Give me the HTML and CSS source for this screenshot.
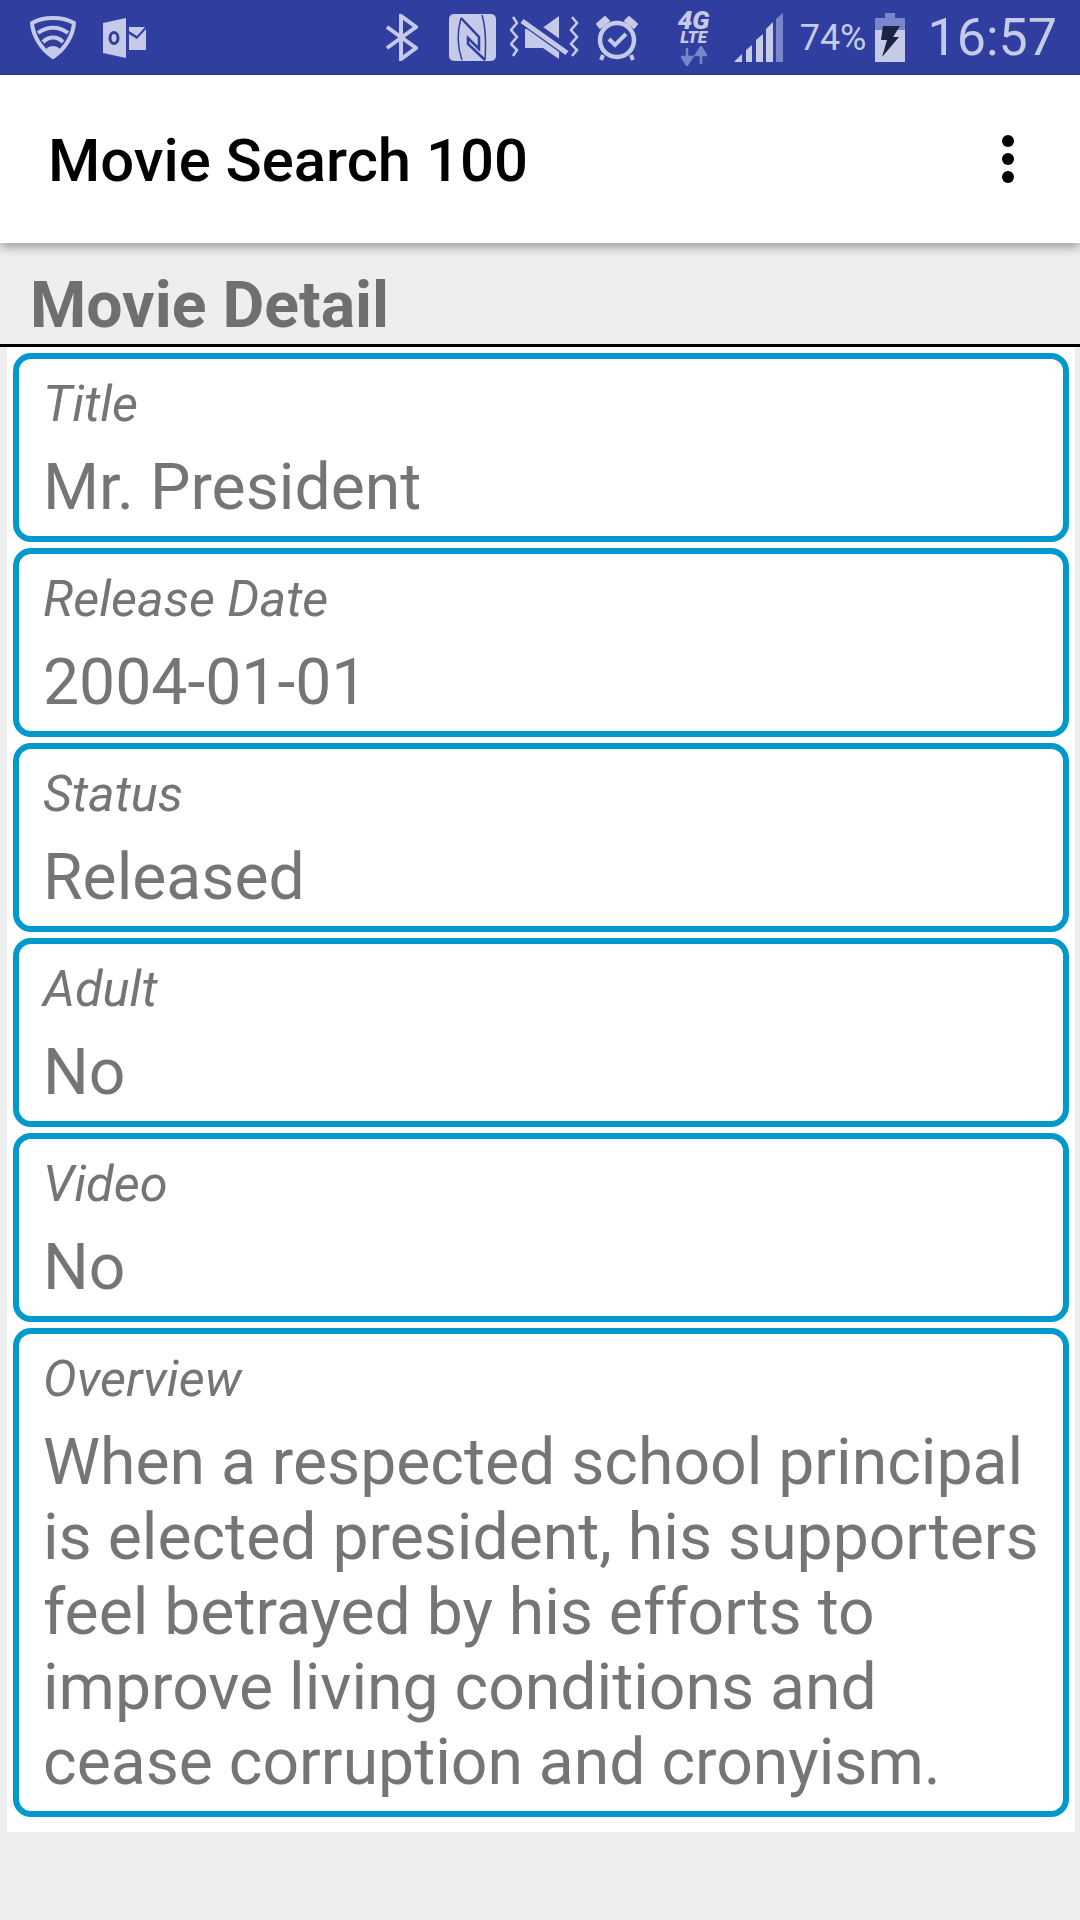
FILE: index.html
```html
<!DOCTYPE html>
<html lang="en">
<head>
    <meta charset="UTF-8">
    <meta name="viewport" content="width=device-width, initial-scale=1.0">
    <title>Movie Search 100</title>
    <link rel="stylesheet" href="styles.css">
</head>
<body>

    <!-- Status bar -->
    <div class="status-bar">
        <div class="status-left">
            <svg class="ico-shield" viewBox="0 0 46 43"><path d="M23 2C15 2 8 3.500 2 7C3 20 11 33 23 41C35 33 43 20 44 7C38 3.500 31 2 23 2Z" fill="none" stroke="#c5cae9" stroke-width="4" stroke-linejoin="round"/><path d="M8 17C17 10 29 10 38 17M13 26C19 20 27 20 33 26" fill="none" stroke="#c5cae9" stroke-width="4"/><path d="M16 33C20 29 26 29 30 33L23 41Z" fill="#c5cae9"/></svg>
            <svg class="ico-outlook" viewBox="0 0 43 40"><path d="M0 5L23 0V40L0 35Z" fill="#c5cae9"/><ellipse cx="11" cy="20" rx="4" ry="5.500" fill="none" stroke="#303f9f" stroke-width="3"/><path d="M26 9H42L34 18L26 13Z" fill="#c5cae9"/><path d="M26 16L34 21L43 11V32H26Z" fill="#c5cae9"/></svg>
        </div>
        <div class="status-right">
            <svg class="ico-bt" viewBox="0 0 33 47"><path d="M2 13L31 34L16 45V2L31 13L2 34" fill="none" stroke="#c5cae9" stroke-width="4"/></svg>
            <svg class="ico-nfc" viewBox="0 0 47 47"><rect width="47" height="47" rx="5" fill="#c5cae9"/><path d="M12 4C8 18 8 32 13 46M33 1C37 14 37 30 36 46" fill="none" stroke="#303f9f" stroke-width="1.500"/><path d="M12 4L30 23V35L19 24V30L36 46" fill="none" stroke="#303f9f" stroke-width="2.500"/></svg>
            <svg class="ico-mute" viewBox="0 0 69 44"><path d="M3 1L7 7L1 14L7 21L1 28L7 34L3 40M62 1L67 7L61 14L67 21L61 28L67 34L62 40" fill="none" stroke="#c5cae9" stroke-width="2.500"/><path d="M15 13H31L49 0V43L33 32H15Z" fill="#c5cae9"/><path d="M11 2L60 37" stroke="#303f9f" stroke-width="11"/><path d="M12 5L57 37" stroke="#c5cae9" stroke-width="5"/></svg>
            <svg class="ico-alarm" viewBox="0 0 44 47"><circle cx="22" cy="26" r="17" fill="none" stroke="#c5cae9" stroke-width="4.500"/><path d="M2 10L10 3L14 7L5 14ZM42 10L34 3L30 7L39 14Z" fill="#c5cae9" stroke="#c5cae9" stroke-width="2" stroke-linejoin="round"/><path d="M14 25L20 31L31 20" fill="none" stroke="#c5cae9" stroke-width="4"/><path d="M8 41L6 46M36 41L38 46" stroke="#c5cae9" stroke-width="4"/></svg>
            <div class="ico-lte">
                <span class="lte-4g">4G</span>
                <span class="lte-text">LTE</span>
                <svg class="lte-arrows" viewBox="0 0 26 20"><path d="M6 2V11M1 11H11L6 19ZM20 18V9M15 9H25L20 1Z" fill="#7986cb" stroke="#7986cb" stroke-width="2.500"/></svg>
            </div>
            <svg class="ico-signal" viewBox="0 0 49 49"><path d="M0 49L8 41V49Z" fill="#c5cae9"/><path d="M12 37L18 32V49H12ZM22 27L29 21V49H22ZM32 16L39 9V49H32Z" fill="#c5cae9"/><path d="M42 6L49 0V49H42Z" fill="#7986cb"/></svg>
            <span class="battery-pct">74%</span>
            <svg class="ico-battery" viewBox="0 0 30 49"><path d="M10 0H20V5H30V17H0V5H10Z" fill="#7986cb"/><rect y="17" width="30" height="32" fill="#c5cae9"/><path d="M8 13H25L18 24H24L7 44L12 27H6Z" fill="#1a2340"/></svg>
            <span class="clock">16:57</span>
        </div>
    </div>

    <!-- App bar -->
    <div class="app-bar">
        <span class="app-title">Movie Search 100</span>
        <div class="overflow-menu">
            <span class="dot"></span>
            <span class="dot"></span>
            <span class="dot"></span>
        </div>
    </div>

    <h1 class="section-title">Movie Detail</h1>

    <div class="detail-panel">
        <div class="field">
            <div class="field-label">Title</div>
            <div class="field-value">Mr. President</div>
        </div>
        <div class="field">
            <div class="field-label">Release Date</div>
            <div class="field-value">2004-01-01</div>
        </div>
        <div class="field">
            <div class="field-label">Status</div>
            <div class="field-value">Released</div>
        </div>
        <div class="field">
            <div class="field-label">Adult</div>
            <div class="field-value">No</div>
        </div>
        <div class="field">
            <div class="field-label">Video</div>
            <div class="field-value">No</div>
        </div>
        <div class="field">
            <div class="field-label">Overview</div>
            <div class="field-value">When a respected school principal is elected president, his supporters feel betrayed by his efforts to improve living conditions and cease corruption and cronyism.</div>
        </div>
    </div>

</body>
</html>
```

FILE: styles.css
```css
html, body {
    margin: 0;
    padding: 0;
}
body {
    width: 1080px;
    height: 1920px;
    overflow: hidden;
    background: #eeeeee;
    font-family: Roboto, sans-serif;
}
svg {
    display: block;
    flex: none;
}

/* status bar */
.status-bar {
    height: 75px;
    background: #303f9f;
    color: #c5cae9;
    display: flex;
    justify-content: space-between;
    align-items: center;
    padding: 0 23px 0 30px;
}
.status-left, .status-right {
    display: flex;
    align-items: center;
}
.ico-shield { width: 46px; height: 43px; margin-right: 27px; }
.ico-outlook { width: 43px; height: 40px; }
.ico-bt { width: 33px; height: 47px; }
.ico-nfc { width: 47px; height: 47px; margin-left: 31px; }
.ico-mute { width: 69px; height: 44px; margin-left: 14px; }
.ico-alarm { width: 44px; height: 47px; margin-left: 16px; }
.ico-lte {
    width: 30px;
    margin-left: 40px;
    display: flex;
    flex-direction: column;
    align-items: center;
    font-weight: 900;
    font-style: italic;
}
.lte-4g { font-size: 26px; line-height: 20px; }
.lte-text { font-size: 17px; line-height: 13px; margin-top: 1px; }
.lte-arrows { width: 26px; height: 20px; margin-top: 2px; }
.ico-signal { width: 49px; height: 49px; margin-left: 25px; }
.battery-pct { font-size: 36px; margin-left: 17px; }
.ico-battery { width: 30px; height: 49px; margin-left: 8px; }
.clock { font-size: 52px; margin-left: 23px; line-height: 1; }

/* app bar */
.app-bar {
    height: 168px;
    box-sizing: border-box;
    background: #ffffff;
    display: flex;
    justify-content: space-between;
    align-items: center;
    padding: 0 66px 0 48px;
    box-shadow: 0 4px 10px rgba(0, 0, 0, 0.35);
    position: relative;
}
.app-title {
    font-size: 59.800px;
    font-weight: 500;
    color: #000000;
    padding-top: 3px;
}
.overflow-menu {
    display: flex;
    flex-direction: column;
    gap: 6px;
}
.dot {
    width: 12px;
    height: 12px;
    border-radius: 50%;
    background: #000000;
}

.section-title {
    margin: 0;
    height: 104px;
    line-height: 124px;
    padding-left: 30px;
    box-sizing: border-box;
    font-size: 64.300px;
    font-weight: 700;
    color: #6f6f6f;
    border-bottom: 3px solid #000000;
}

/* detail cards */
.detail-panel {
    margin: 0 5px 0 7px;
    padding: 6px 6px 15px;
    background: #ffffff;
    display: flex;
    flex-direction: column;
    gap: 6px;
}
.field {
    border: 6px solid #0099cc;
    border-radius: 18px;
    padding: 15px 18px 11px 24px;
}
.field-label {
    font-size: 50.500px;
    font-style: italic;
    color: #757575;
    line-height: 60px;
    margin-bottom: 16px;
}
.field-value {
    font-size: 64.250px;
    color: #757575;
    line-height: 75px;
}
```
